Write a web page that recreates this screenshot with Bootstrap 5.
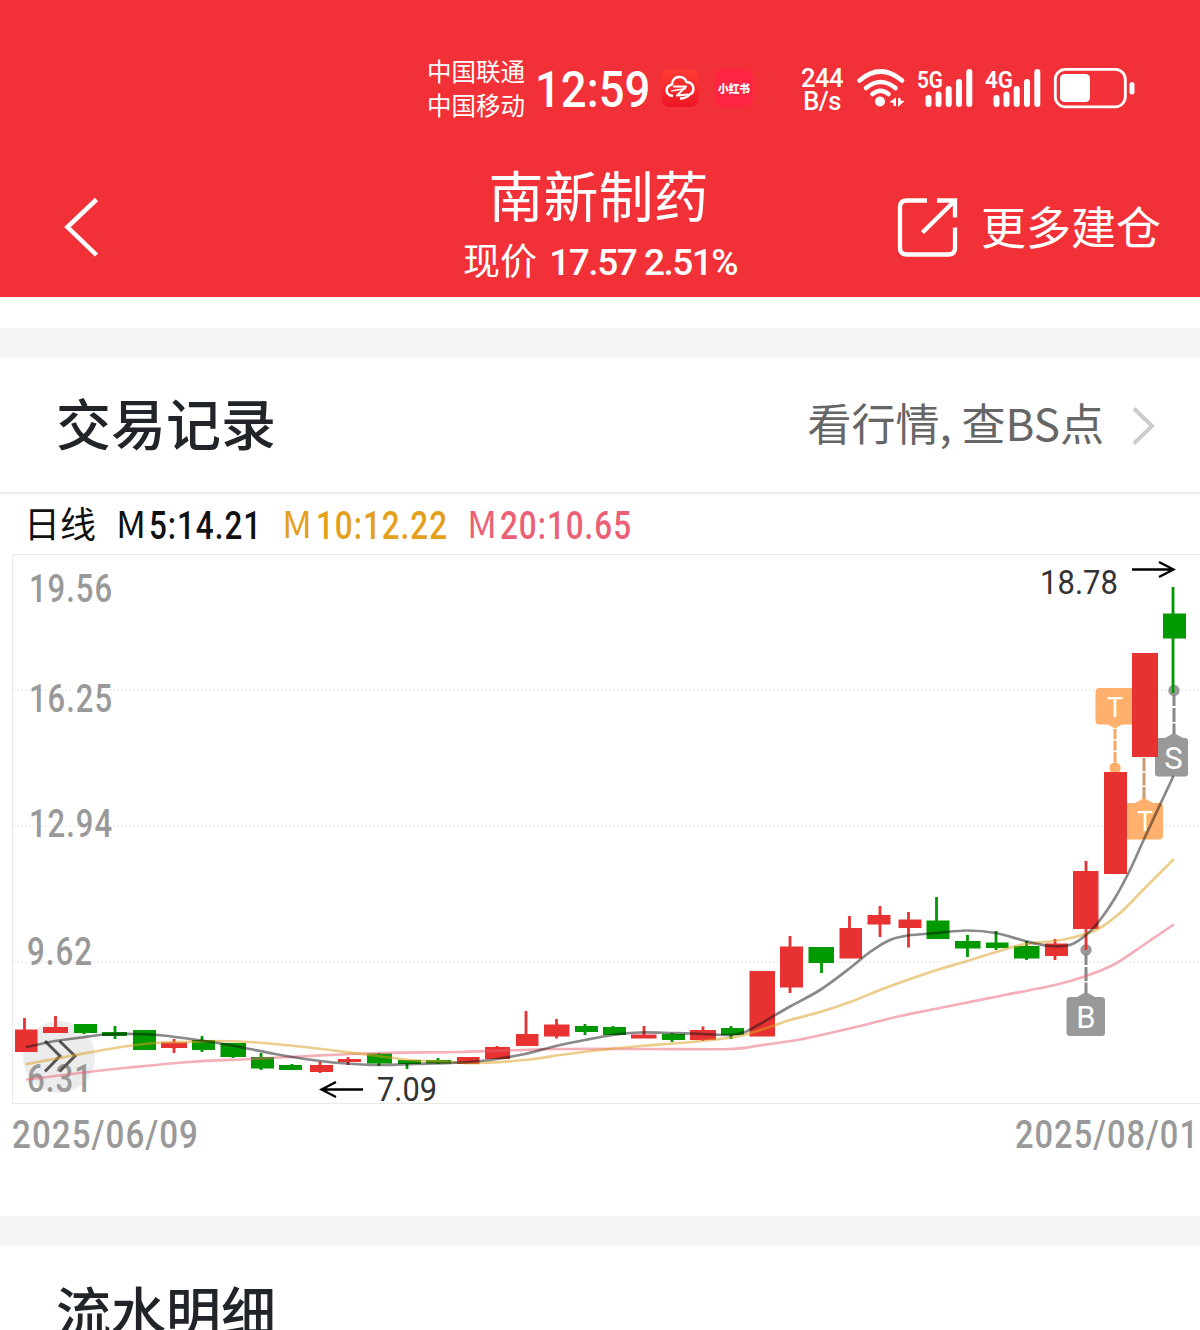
<!DOCTYPE html>
<html lang="zh-CN">
<head>
<meta charset="utf-8">
<meta name="viewport" content="width=device-width, initial-scale=1">
<title>南新制药 交易记录</title>
<link href="https://cdn.jsdelivr.net/npm/bootstrap@5.3.0/dist/css/bootstrap.min.css" rel="stylesheet">
<style>
body{font-family:"Noto Sans CJK SC",sans-serif;background:#fff;height:1330px;overflow:hidden}
svg{display:block;flex:none}
.app-header{background:#f23037;height:297px}
.status-bar{height:136px;padding:42px 0 0 427px}
.carriers{font-size:24.5px;line-height:34.5px;width:98px;height:92px}
.clock{font:500 50.5px/96px Roboto,sans-serif;width:113px;margin-left:10px}
.clock span{display:inline-block;transform:scaleX(.9);transform-origin:0 50%}
.rate{font:500 25.5px/23px Roboto,sans-serif;width:46px;margin-left:46px;padding-top:25px;letter-spacing:-.5px}
.title-row{height:161px;padding:0 39px}
.side{flex:1 1 0}
.stock-name{font-size:55px;line-height:66px;margin-top:24px;margin-left:-3px}
.stock-price{font-size:37px;line-height:48px;margin-top:9px}
.stock-price span{font-family:Roboto,sans-serif;font-weight:500;letter-spacing:-1.5px}
.more{font-size:45px;line-height:58px;margin-left:23px}
.divider{height:30px;background:#f4f4f4}
.section-head{height:136px;padding:0 42px 9px 56px;border-bottom:2px solid #ededed}
.section-title{font-size:55px;line-height:66px;font-weight:500;color:#212529}
.section-link{font-size:44px;line-height:60px;color:#666;padding-top:3px}
.section-link svg{margin:6px 0 0 24px}
.num{font-family:Roboto,sans-serif;font-weight:500;letter-spacing:1.2px}
.axis{fill:#999;font-size:38px}
.latin{font-family:Roboto,sans-serif}
</style>
</head>
<body>
<header class="app-header text-white">
  <div class="status-bar d-flex">
    <div class="carriers d-flex flex-column justify-content-center text-nowrap"><div>中国联通</div><div>中国移动</div></div>
    <div class="clock"><span>12:59</span></div>
    <svg width="92" height="92" viewBox="661 42 92 92" style="margin-left:13px">
      <defs><linearGradient id="appRed" x2="0" y2="1"><stop stop-color="#ff3c35"/><stop offset="1" stop-color="#ed1624"/></linearGradient></defs>
      <rect x="661.500" y="69" width="37.500" height="38" rx="8" fill="url(#appRed)"/>
      <g fill="none" stroke="#fff" stroke-width="2.500" stroke-linejoin="round">
        <path d="M673 96C664.500 95 665 86 672 84.500C672 75.500 684 74.500 686.500 82C695 82.500 695 92.500 689.500 94.500C687 97.500 683 98.500 680 98.500"/>
        <path d="M673 86.500H686L677 95.500L688 94.500" stroke-width="2"/><path d="M671 91L686 88.500" stroke-width="1.500"/>
      </g>
      <rect x="715" y="69" width="38" height="38" rx="8" fill="#ff2442"/>
      <text x="718" y="92.500" font-size="11.500" font-weight="900" textLength="32" lengthAdjust="spacingAndGlyphs" fill="#fff">小红书</text>
    </svg>
    <div class="rate d-flex flex-column text-center"><div>244</div><div>B/s</div></div>
    <svg width="295" height="92" viewBox="845 42 295 92">
      <g fill="none" stroke="#fff" stroke-width="4.600" stroke-linecap="round">
        <path d="M859.500 80.500Q880.500 62.500 902 80.500M866 88Q880.500 76 895.500 88M872.500 94Q880.500 87.500 888.500 94"/>
      </g>
      <circle cx="880" cy="101.500" r="5" fill="#fff"/>
      <path d="M889.500 102L896 97.500V106H893.500V103ZM898 98H900.500V100.500L904.500 101L898 107Z" fill="#fff"/>
      <g stroke="#fff" stroke-width="6" stroke-linecap="round">
        <path d="M928.500 98V104M938.500 94.500V104M948.700 89V104M959 82V104M969.300 72V104"/>
        <path d="M996.500 98V104M1006.500 94.500V104M1016.700 89V104M1027 82V104M1037.300 72V104"/>
      </g>
      <g fill="#fff" font-family="Roboto,sans-serif" font-size="24" font-weight="600">
        <text x="917" y="87.500" textLength="26" lengthAdjust="spacingAndGlyphs">5G</text>
        <text x="985" y="87.500" textLength="28" lengthAdjust="spacingAndGlyphs">4G</text>
      </g>
      <rect x="1055.300" y="69.300" width="70" height="37.500" rx="10" fill="none" stroke="#fff" stroke-width="2.800"/>
      <rect x="1060" y="74" width="30" height="28" rx="4.500" fill="#fff"/>
      <rect x="1129.500" y="82" width="5" height="12.500" rx="2.500" fill="#fff"/>
    </svg>
  </div>
  <div class="title-row d-flex">
    <div class="side">
      <svg width="40" height="64" viewBox="62 195 40 64" style="margin:59px 0 0 23px"><path d="M96.500 199.500L67.500 227L96.500 255" fill="none" stroke="#fff" stroke-width="4.500"/></svg>
    </div>
    <div class="text-center text-nowrap">
      <div class="stock-name">南新制药</div>
      <div class="stock-price">现价 <span class="ms-1">17.57 2.51%</span></div>
    </div>
    <div class="side d-flex justify-content-end" style="padding-top:61px">
      <svg width="62" height="62" viewBox="896 197 62 62"><path d="M927 200.500H907Q900 200.500 900 207V248Q900 254.500 907 254.500H948Q955 254.500 955 248V227.500M937 200.500H955V217.500M955 200.500L922.500 232.500" fill="none" stroke="#fff" stroke-width="4.300"/></svg>
      <div class="more text-nowrap">更多建仓</div>
    </div>
  </div>
</header>

<div style="height:31px"></div>
<div class="divider"></div>

<section>
  <div class="section-head d-flex align-items-center justify-content-between">
    <div class="section-title">交易记录</div>
    <div class="section-link d-flex align-items-center text-nowrap">看行情, 查BS点
      <svg width="30" height="40" viewBox="1128 405 30 40"><path d="M1134 408.500L1152 426L1134 443.500" fill="none" stroke="#ccc" stroke-width="4"/></svg>
    </div>
  </div>

  <svg id="kline" width="1200" height="722" viewBox="0 494 1200 722">
    <g font-size="36">
      <text x="24" y="538" fill="#111">日线</text>
      <g fill="#111"><text x="116" y="538" font-size="37">M</text><text class="num" x="149" y="538.500" font-size="38" textLength="113" lengthAdjust="spacingAndGlyphs">5:14.21</text></g>
      <g fill="#e4a01b"><text x="282" y="538" font-size="37">M</text><text class="num" x="316" y="538.500" font-size="38" textLength="132" lengthAdjust="spacingAndGlyphs">10:12.22</text></g>
      <g fill="#eb6074"><text x="467" y="538" font-size="37">M</text><text class="num" x="500" y="538.500" font-size="38" textLength="132" lengthAdjust="spacingAndGlyphs">20:10.65</text></g>
    </g>
    <path d="M1200 554.500H12.500V1103.500H1200" fill="none" stroke="#e9e9e9"/>
    <path d="M13 690H1200M13 826H1200M13 962H1200" stroke="#eee" stroke-width="1.500" stroke-dasharray="2 2"/>
    <circle cx="59" cy="1057" r="36" fill="#ececec"/>
    <g class="num axis">
      <text x="29" y="601.500" textLength="84" lengthAdjust="spacingAndGlyphs">19.56</text>
      <text x="29" y="711.500" textLength="84" lengthAdjust="spacingAndGlyphs">16.25</text>
      <text x="29" y="836.500" textLength="84" lengthAdjust="spacingAndGlyphs">12.94</text>
      <text x="27" y="964.500" textLength="66" lengthAdjust="spacingAndGlyphs">9.62</text>
      <text x="27" y="1091.500" textLength="66" lengthAdjust="spacingAndGlyphs">6.31</text>
      <text x="12" y="1147.500" textLength="187" lengthAdjust="spacingAndGlyphs">2025/06/09</text>
      <text x="1015" y="1147.500" textLength="184" lengthAdjust="spacingAndGlyphs">2025/08/01</text>
    </g>
    <path d="M45 1041L60 1056L45 1071.500M59.500 1041L75 1056L59.500 1071.500" fill="none" stroke="#555" stroke-width="3"/>
    <g fill="#ffb06c">
      <rect x="1095.500" y="688" width="40" height="36.500" rx="4"/><path d="M1107 724L1115 728.500L1123 724Z"/>
      <circle cx="1115" cy="768" r="5.700"/>
      <rect x="1125" y="803" width="38" height="36.500" rx="4"/><path d="M1135 803L1144 798L1153 803Z"/>
    </g>
    <path d="M1115 729V765" stroke="#f6a765" stroke-width="3" stroke-dasharray="10 1.500"/>
    <path d="M1144 758V799" stroke="#c99a70" stroke-width="3" stroke-dasharray="13 1.500"/>
    <g fill="#999">
      <rect x="1155" y="738" width="33" height="38.500" rx="3"/><path d="M1165 738L1174 733L1183 738Z"/>
      <circle cx="1174" cy="690.500" r="5.700"/><circle cx="1086" cy="950" r="5.700"/>
      <rect x="1066.500" y="997" width="38.500" height="39" rx="3.500"/><path d="M1077 997L1086 992L1095 997Z"/>
    </g>
    <path d="M1174 694V734M1086 953V993" stroke="#888" stroke-width="3" stroke-dasharray="12 2 14 1.500"/>
    <g class="latin" fill="#fff" text-anchor="middle">
      <text x="1115" y="716.500" font-size="27">T</text><text x="1145" y="831" font-size="27">T</text>
      <text x="1173.500" y="768.500" font-size="31">S</text><text x="1086" y="1027.500" font-size="31">B</text>
    </g>
    <g id="candles"></g>
    <g id="averages" fill="none" stroke-width="2.700" stroke-linecap="round"></g>
    <g class="latin" fill="#333" font-size="32.500">
      <text x="1040" y="594" textLength="78" lengthAdjust="spacingAndGlyphs">18.78</text>
      <text x="377" y="1101" textLength="60" lengthAdjust="spacingAndGlyphs">7.09</text>
    </g>
    <path d="M1132 569.500H1173M1159 562L1173.500 569.500L1159 577M363 1089.500H322M336 1082L321.500 1089.500L336 1097" fill="none" stroke="#000" stroke-width="2.300"/>
  </svg>
</section>

<div class="divider"></div>
<section>
  <div class="section-head d-flex align-items-center"><div class="section-title">流水明细</div></div>
</section>

<script src="https://cdn.jsdelivr.net/npm/bootstrap@5.3.0/dist/js/bootstrap.bundle.min.js"></script>
<script>
// Each candle: rising (1) or falling (0), left, right, body top, body bottom, wick x, wick top, wick bottom
const candles = [
[1,15,37.5,1029.5,1052,24.5,1018,1052],[1,43,68,1027,1033,55.5,1016,1033],[0,74,97,1024,1033,84,1024,1034],
[0,102,127,1032,1036,115,1026,1039],[0,133,156,1030,1050,144,1030,1050],[1,161,187,1042.5,1048,174,1039,1053],
[0,192,215,1040,1050,202,1036,1052],[0,220.5,246,1043,1057,233,1043,1058],[0,251,274,1057,1068.5,261,1053,1070],
[0,279,302,1065,1070,292,1064,1070],[1,310,333,1065,1072,320,1062,1073],[1,338,361,1059,1062,348,1057,1065],
[0,367,392,1053.5,1063.5,379,1053,1066],[0,398,421,1060,1064,407,1060,1069],[0,426,451,1060,1063.5,438,1058,1064],
[1,457,479.5,1057,1064,468,1057,1064],[1,485,510,1047,1059,497,1046,1059],[1,516,538.5,1034,1046,526,1011,1046],
[1,544,569.5,1024.5,1036.5,556.5,1019,1038.5],[0,575,598,1026,1032,585,1024,1035],[0,603,626,1027,1035,613,1026,1035],
[1,631,656.5,1034.5,1038.5,644,1026,1038],[0,662,685,1034,1040,672,1033,1042],[1,690,716,1030,1040,703,1026.5,1041],
[0,721,744,1028,1035,731,1026,1039],[1,749.5,775,971,1036.5,762,971,1036],[1,780,803,946.5,987.5,790,936,993],
[0,808.5,834,947,963,821.5,947,973],[1,839.5,862,928,958.5,849.5,916,958],[1,867.5,890.5,915,924.5,880,906,937],
[1,898.5,921.5,919.5,928,908.5,912,947.5],[0,926.5,949.5,920.5,939,936.5,897,939],[0,955,980.5,941,948.5,967.5,935,957],
[0,986,1008.5,942.5,948,996,931,950],[0,1014,1039.5,946,958.5,1026.5,941,960],[1,1045,1068,943.5,956,1055,939,960],
[1,1073,1098.5,871,929,1086,861,950],[1,1104,1127,772,874,1115,772,874],[1,1132,1158,653,757,1144,653,757],
[0,1163,1186,613.5,638.5,1173,587,693]];
document.getElementById('candles').innerHTML = candles.map(([up,l,r,t,b,x,h,w]) =>
  `<path fill="${up ? '#e83232' : '#009900'}" d="M${l} ${t}H${r}V${b}H${l}ZM${x-1.4} ${h}H${x+1.4}V${w}H${x-1.4}Z"/>`).join('');

// Moving averages: stroke colour and sampled points, M20, M10, M5
const averages = [
['rgba(235,96,116,.5)',[27,1079.5,80,1073,130,1067.5,190,1062,250,1059,310,1056,380,1053,460,1052,520,1050,560,1049,650,1049,730,1049,760,1045.5,800,1039.5,830,1033,860,1026,900,1016,940,1008,1000,996,1055,985,1086,976,1115,964,1145,944,1173,925]],
['rgba(221,160,32,.52)',[27,1064,70,1056,115,1048,155,1043,185,1042,215,1041,250,1042,290,1045.5,330,1050,370,1055,410,1060,450,1062,480,1063,530,1059.5,560,1055,600,1050,640,1046,680,1043,715,1039.5,740,1036,770,1027,790,1020,820,1012,850,1002,880,990,910,979,940,969,967,961,996,952,1025,944,1055,941,1075,937,1098,929,1120,913,1140,893,1173,860]],
['rgba(20,20,20,.5)',[27,1047,55,1041,85,1037,105,1034.5,135,1034,158,1035,187,1038.5,215,1042.5,245,1048,275,1054,305,1059,333,1062.5,362,1064.5,385,1065,415,1064,450,1063,480,1061,500,1058.5,525,1054,556,1046,585,1040,613,1035,640,1032.5,672,1033,703,1034,731,1035,745,1032,760,1024,790,1006.5,820,990,850,968,870,952,890,940,908,935.5,937,933,967,930.5,996,933,1025,941,1050,946,1070,945,1086,935,1100,920,1115,898,1130,870,1145,837,1173,777]]];
// Catmull-Rom interpolation through the sampled average points
function smooth(a){
  const p=[];for(let i=0;i<a.length;i+=2)p.push([a[i],a[i+1]]);
  let d='M'+p[0];
  for(let i=0;i<p.length-1;i++){
    const q=p[i-1]||p[i],s=p[i],e=p[i+1],f=p[i+2]||e;
    d+='C'+[s[0]+(e[0]-q[0])/6,s[1]+(e[1]-q[1])/6,e[0]-(f[0]-s[0])/6,e[1]-(f[1]-s[1])/6,e[0],e[1]];
  }
  return d;
}
document.getElementById('averages').innerHTML = averages.map(([c,pts]) => `<path stroke="${c}" d="${smooth(pts)}"/>`).join('');
</script>
</body>
</html>
